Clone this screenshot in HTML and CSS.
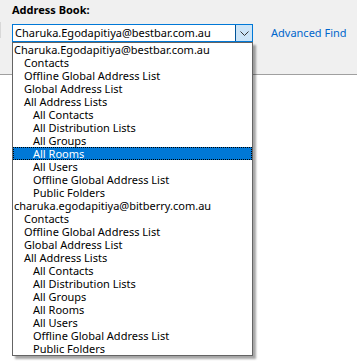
FILE: index.html
```html
<!DOCTYPE html>
<html>
<head>
<meta charset="utf-8">
<link rel="stylesheet" href="styles.css">
</head>
<body>
<div class="panel">
  <div class="edge"></div>
  <div class="label">Address Book:</div>
  <div class="row">
    <div class="combo">
      <div class="combo-text">Charuka.Egodapitiya@bestbar.com.au</div>
      <div class="combo-btn">
        <svg width="9" height="5" viewBox="0 0 9 5"><path d="M0.5 0.5 L4.5 4.5 L8.5 0.5" fill="none" stroke="#333" stroke-width="1"/></svg>
      </div>
    </div>
    <a class="adv">Advanced Find</a>
  </div>
</div>
<div class="content">
  <ul class="list">
    <li class="l0">Charuka.Egodapitiya@bestbar.com.au</li>
    <li class="l1">Contacts</li>
    <li class="l1">Offline Global Address List</li>
    <li class="l1">Global Address List</li>
    <li class="l1">All Address Lists</li>
    <li class="l2">All Contacts</li>
    <li class="l2">All Distribution Lists</li>
    <li class="l2">All Groups</li>
    <li class="l2 sel">All Rooms</li>
    <li class="l2">All Users</li>
    <li class="l2">Offline Global Address List</li>
    <li class="l2">Public Folders</li>
    <li class="l0">charuka.egodapitiya@bitberry.com.au</li>
    <li class="l1">Contacts</li>
    <li class="l1">Offline Global Address List</li>
    <li class="l1">Global Address List</li>
    <li class="l1">All Address Lists</li>
    <li class="l2">All Contacts</li>
    <li class="l2">All Distribution Lists</li>
    <li class="l2">All Groups</li>
    <li class="l2">All Rooms</li>
    <li class="l2">All Users</li>
    <li class="l2">Offline Global Address List</li>
    <li class="l2">Public Folders</li>
  </ul>
</div>
</body>
</html>
```
FILE: styles.css
```css
html, body {
  margin: 0;
  padding: 0;
  background: #ffffff;
  font-family: "Noto Sans", "DejaVu Sans", sans-serif;
  font-size: 11px;
  color: #000;
}
.panel {
  position: relative;
  height: 75px;
  background: #f0f0f0;
  border-bottom: 1px solid #a0a0a0;
  box-sizing: border-box;
  padding: 3px 0 0 12px;
}
.edge {
  position: absolute;
  left: 0;
  top: 22px;
  width: 1px;
  height: 16px;
  background: #d8d8d8;
}
.label {
  font-weight: bold;
  font-size: 11px;
  line-height: 14px;
  height: 21px;
}
.row {
  display: flex;
  align-items: flex-start;
}
.combo {
  width: 241px;
  height: 18px;
  box-sizing: border-box;
  border: 1px solid #0078d7;
  background: #fff;
  display: flex;
}
.combo-text {
  flex: 1;
  padding-left: 2px;
  line-height: 16px;
  white-space: nowrap;
  overflow: hidden;
}
.combo-btn {
  width: 16px;
  height: 16px;
  background: #cce4f7;
  border-left: 1px solid #005499;
  display: flex;
  align-items: center;
  justify-content: center;
}
.adv {
  margin-left: 18px;
  margin-top: 1px;
  color: #0066cc;
  line-height: 16px;
}
.content {
  position: relative;
  height: 289px;
  background: #fff;
}
.list {
  position: absolute;
  left: 12px;
  top: -33px;
  width: 241px;
  box-sizing: border-box;
  margin: 0;
  padding: 0;
  list-style: none;
  background: #fff;
  border: 1px solid #646464;
  box-shadow: 3px 3px 2px rgba(0, 0, 0, 0.35);
}
.list li {
  height: 13px;
  line-height: 13px;
  white-space: nowrap;
  color: #000;
}
.l0 { padding-left: 1px; }
.l1 { padding-left: 11px; }
.l2 { padding-left: 20px; }
.list li.sel {
  background: #0078d7;
  color: #fff;
  outline: 1px dotted #000;
  outline-offset: -1px;
}
```
